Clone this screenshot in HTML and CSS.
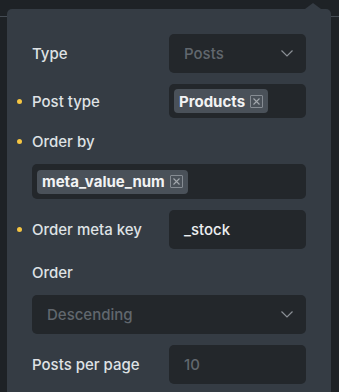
FILE: index.html
```html
<!DOCTYPE html>
<html lang="en">
<head>
    <meta charset="UTF-8">
    <meta name="viewport" content="width=device-width, initial-scale=1.0">
    <title>Query settings</title>
    <link rel="stylesheet" href="styles.css">
</head>
<body>

<div class="popup">
    <div class="field inline">
        <label>Type</label>
        <div class="control select">
            <span class="placeholder">Posts</span>
            <svg class="chevron" width="12" height="7" viewBox="0 0 12 7"><path d="M0.5 0.5 L6 6 L11.5 0.5" fill="none" stroke="#8b9096" stroke-width="1.2"/></svg>
        </div>
    </div>
    <div class="field inline">
        <label class="changed">Post type</label>
        <div class="control tags">
            <span class="tag">Products <span class="remove"><svg width="7" height="7" viewBox="0 0 7 7"><path d="M0.5 0.5 L6.5 6.5 M6.5 0.5 L0.5 6.5" stroke="#a3a8ad" stroke-width="1.1"/></svg></span></span>
        </div>
    </div>
    <div class="field stacked">
        <label class="changed">Order by</label>
        <div class="control tags">
            <span class="tag">meta_value_num <span class="remove"><svg width="7" height="7" viewBox="0 0 7 7"><path d="M0.5 0.5 L6.5 6.5 M6.5 0.5 L0.5 6.5" stroke="#a3a8ad" stroke-width="1.1"/></svg></span></span>
        </div>
    </div>
    <div class="field inline">
        <label class="changed">Order meta key</label>
        <div class="control text">_stock</div>
    </div>
    <div class="field stacked">
        <label>Order</label>
        <div class="control select">
            <span class="placeholder">Descending</span>
            <svg class="chevron" width="12" height="7" viewBox="0 0 12 7"><path d="M0.5 0.5 L6 6 L11.5 0.5" fill="none" stroke="#8b9096" stroke-width="1.2"/></svg>
        </div>
    </div>
    <div class="field inline">
        <label>Posts per page</label>
        <div class="control text"><span class="placeholder">10</span></div>
    </div>
</div>

</body>
</html>
```

FILE: styles.css
```css
* {
    box-sizing: border-box;
    margin: 0;
    padding: 0;
}
body {
    font-family: Inter, "Noto Sans", sans-serif;
    font-size: 15px;
    color: #dfe2e5;
    background: #1e2226 linear-gradient(to bottom, transparent 16px, #454c54 16px, #454c54 17px, transparent 17px);
    height: 100vh;
    overflow: hidden;
}
.popup {
    position: relative;
    margin: 9px 0 0 7px;
    width: 324px;
    padding: 25px 25px 20px;
    background-color: #353c44;
    border-radius: 5px;
    display: flex;
    flex-direction: column;
    gap: 11px;
}
.popup::before {
    content: "";
    position: absolute;
    top: -6px;
    right: 10px;
    border-left: 8px solid transparent;
    border-right: 8px solid transparent;
    border-bottom: 6px solid #353c44;
}
label {
    font-weight: 500;
}
.field.inline {
    display: grid;
    grid-template-columns: 137px 137px;
    align-items: center;
}
.field.stacked {
    padding-top: 3px;
}
.field.stacked label {
    display: block;
    line-height: 20px;
    margin-bottom: 12px;
}
.changed::before {
    content: "";
    display: inline-block;
    width: 5px;
    height: 5px;
    border-radius: 50%;
    background-color: #f5c542;
    margin-left: -15px;
    margin-right: 10px;
    vertical-align: middle;
    position: relative;
    top: -1px;
}
.control {
    background-color: #23272b;
    border-radius: 5px;
    min-height: 39px;
    display: flex;
    align-items: center;
    padding: 0 15px;
}
.select {
    justify-content: space-between;
    padding-right: 13px;
}
.placeholder {
    color: #61676e;
    font-weight: 500;
}
.tags {
    min-height: 34px;
    padding: 5px;
}
.field.stacked .tags {
    min-height: 35px;
}
.tag {
    display: inline-flex;
    align-items: center;
    height: 24px;
    padding: 0 5px;
    background-color: #4a5159;
    border-radius: 4px;
    font-weight: 700;
    color: #f2f3f4;
}
.remove {
    display: inline-flex;
    align-items: center;
    justify-content: center;
    width: 13px;
    height: 13px;
    margin-left: 5px;
    border: 1px solid #868c93;
    border-radius: 1px;
}
.text {
    color: #eceef0;
    font-weight: 500;
}
```
